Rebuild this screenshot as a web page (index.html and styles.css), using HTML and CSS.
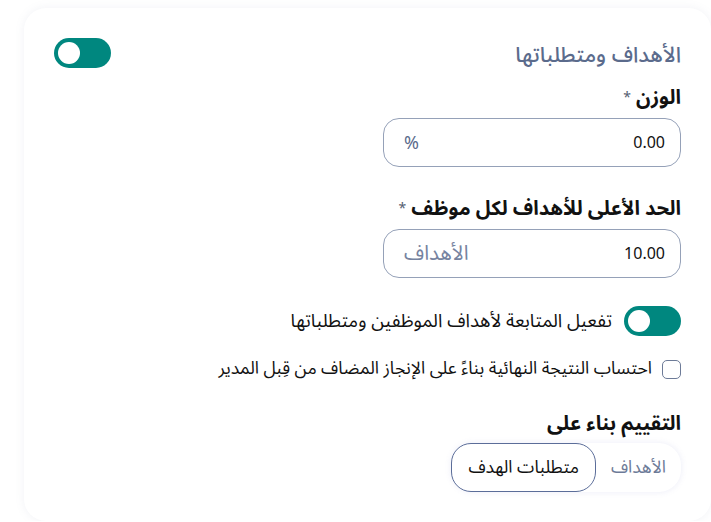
FILE: index.html
```html
<!DOCTYPE html>
<html lang="ar" dir="rtl">
<head>
<meta charset="utf-8">
<link rel="stylesheet" href="styles.css">
</head>
<body>
<div class="card">
  <div class="header">
    <div class="title">الأهداف ومتطلباتها</div>
    <span class="toggle"><span class="knob"></span></span>
  </div>

  <div class="field first">
    <div class="label">الوزن <span class="req">*</span></div>
    <div class="input">
      <span class="value">0.00</span>
      <span class="suffix pct">%</span>
    </div>
  </div>

  <div class="field">
    <div class="label">الحد الأعلى للأهداف لكل موظف <span class="req">*</span></div>
    <div class="input">
      <span class="value">10.00</span>
      <span class="suffix">الأهداف</span>
    </div>
  </div>

  <div class="toggle-row">
    <span class="toggle"><span class="knob"></span></span>
    <span class="opt-text wide">تفعيل المتابعة لأهداف الموظفين ومتطلباتها</span>
  </div>

  <div class="check-row">
    <span class="checkbox"></span>
    <span class="opt-text">احتساب النتيجة النهائية بناءً على الإنجاز المضاف من قِبل المدير</span>
  </div>

  <div class="label eval">التقييم بناء على</div>
  <div class="segmented">
    <span class="seg">الأهداف</span>
    <span class="seg active">متطلبات الهدف</span>
  </div>
</div>
</body>
</html>
```

FILE: styles.css
```css
html, body {
  margin: 0;
  padding: 0;
  background: #ffffff;
}
body {
  padding: 8px 0 0 0;
  font-family: "Noto Sans Arabic", "DejaVu Sans", sans-serif;
  color: #111111;
}
.card {
  margin-left: 24px;
  width: 627px;
  height: 483px;
  padding: 30px 30px 0 30px;
  background: #ffffff;
  border-radius: 22px;
  box-shadow: 0 0 10px rgba(120, 130, 170, 0.10);
  box-sizing: content-box;
  overflow: hidden;
}
.header {
  display: flex;
  justify-content: space-between;
  align-items: center;
  height: 30px;
}
.title {
  font-size: 21.5px;
  line-height: 28px;
  color: #5b6b8c;
  font-weight: 500;
  padding-top: 3px;
}
.toggle {
  display: inline-flex;
  align-items: center;
  width: 57px;
  height: 30px;
  border-radius: 15px;
  background: #00877f;
  direction: ltr;
  padding: 0 4px;
  box-sizing: border-box;
  flex-shrink: 0;
}
.knob {
  width: 22px;
  height: 22px;
  border-radius: 50%;
  background: #ffffff;
}
.field {
  margin-top: 30px;
  width: 298px;
}
.field.first {
  margin-top: 18px;
}
.label {
  font-size: 20px;
  font-weight: 700;
  color: #111111;
  line-height: 24px;
}
.req {
  font-size: 14px;
  color: #555e70;
  vertical-align: top;
  font-weight: 400;
}
.input {
  margin-top: 8px;
  height: 49px;
  border: 1px solid #95a1b8;
  border-radius: 16px;
  box-sizing: border-box;
  display: flex;
  justify-content: space-between;
  align-items: center;
  padding: 0 15px 0 20px;
}
.value {
  font-size: 16px;
  color: #111111;
}
.suffix {
  font-size: 20.5px;
  color: #7683a0;
}
.pct {
  font-size: 18px;
  color: #5b6b8c;
}
.toggle-row {
  margin-top: 28px;
  display: flex;
  align-items: center;
  gap: 12px;
}
.opt-text {
  font-size: 17.5px;
  line-height: 24px;
  color: #111111;
}
.opt-text.wide {
  font-size: 18.6px;
}
.check-row {
  margin-top: 21px;
  display: flex;
  align-items: center;
  gap: 10px;
}
.checkbox {
  width: 19px;
  height: 19px;
  border: 1.5px solid #6d7b98;
  border-radius: 5px;
  box-sizing: border-box;
}
.eval {
  margin-top: 31px;
}
.segmented {
  margin-top: 7px;
  display: inline-flex;
  align-items: center;
  height: 49px;
  border-radius: 22px;
  background: #ffffff;
  box-shadow: 0 0 6px rgba(110, 120, 200, 0.14);
}
.seg {
  height: 49px;
  display: flex;
  align-items: center;
  font-size: 17.5px;
  padding: 0 15px;
  color: #6d7b98;
  box-sizing: border-box;
}
.seg.active {
  border: 1px solid #5b6d99;
  border-radius: 20px;
  color: #111111;
  padding: 0 16px;
  background: #ffffff;
}
```
